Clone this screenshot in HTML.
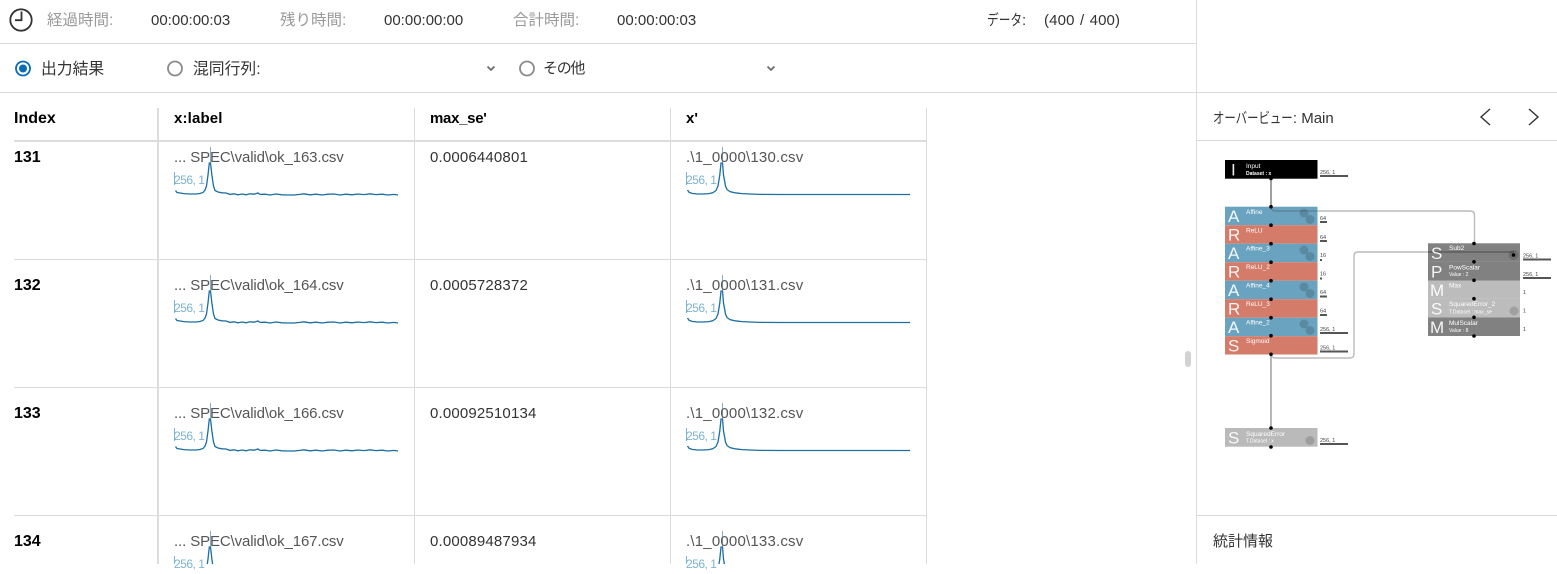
<!DOCTYPE html>
<html lang="ja"><head><meta charset="utf-8"><title>Results</title>
<style>
html,body{margin:0;padding:0;background:#fff}
body{width:1557px;height:564px;overflow:hidden;position:relative;font-family:"Liberation Sans","Noto Sans CJK JP",sans-serif;font-size:15px;color:#222}
.t{position:absolute;line-height:20px;height:20px;white-space:nowrap}
.g{color:#999;font-size:15.500px}
.b{font-weight:bold;color:#000}
.n{font-size:16px}
.d{color:#555}
.f1{letter-spacing:-.12px}
.f2{letter-spacing:.2px}
.f3{letter-spacing:.17px}
.l{color:#7fb2d0;font-size:12px;letter-spacing:-.5px}
.k{color:#333}
.c16{font-size:15.800px}
.sq{display:inline-block;transform-origin:left center}
svg{position:absolute;left:0;top:0}
svg text{font-family:"Liberation Sans",sans-serif}
.w5{font-size:6.500px;fill:#fff}
.w4{font-size:5px;fill:#fff}
.big{font-size:17px;fill:#fff;fill-opacity:.92}
.s{font-size:5.500px;fill:#444}
</style></head><body>
<svg width="1557" height="564" viewBox="0 0 1557 564">
<defs>
<path id="sp" fill="none" stroke="#1a6fa3" stroke-width="1.300" d="M175.500 190.500L177 192.500L180 193L184 193.600L190 194L196 194L200 193.500L203 192.500L205 190L206.500 186L208 175L209.300 163L210.500 163L212 176L213.500 186L215 190.500L218 192L222 192.800L226 193L230 194.400L234 193.800L238 194.800L242 194L246 194.800L250 193.800L254 194.200L258 193L260 194.400L265 194.200L270 195L276 194L282 194.800L288 195L294 195L300 194.400L304 193.800L310 194.800L316 194.200L322 195L328 194.200L334 194L340 195L346 194.200L352 194.800L358 194L364 194.600L370 193.800L376 194.600L382 194.200L388 195L394 194.400L398 195"/>
<path id="sq" fill="none" stroke="#1a6fa3" stroke-width="1.300" d="M687.500 190L689 192.200L692 193.400L697 194L703 194L709 193.600L713 192.600L716 190.500L718 186L719.800 175L721 163L722.500 163L723.500 175L725.500 186L727 189.500L730 191.600L735 192.800L742 193.600L750 194L760 194.400L780 194.500L910 194.500"/>
<g id="tk"><rect x="174" y="172" width="1" height="13" fill="#7fb2d0"/></g>
</defs>

<g fill="#dcdcdc">
<rect x="0" y="43" width="1196" height="1"/>
<rect x="0" y="92" width="1557" height="1"/>
<rect x="1196" y="0" width="1" height="564"/>
<rect x="1197" y="140" width="360" height="1"/>
<rect x="1197" y="515" width="360" height="1"/>
<rect x="14" y="140" width="912" height="2"/>
<rect x="14" y="259" width="912" height="1"/>
<rect x="14" y="387" width="912" height="1"/>
<rect x="14" y="515" width="912" height="1"/>
<rect x="157" y="108" width="2" height="456"/>
<rect x="414" y="108" width="1" height="456"/>
<rect x="670" y="108" width="1" height="456"/>
<rect x="926" y="108" width="1" height="456"/>
</g>

<circle cx="21" cy="20" r="10.700" fill="none" stroke="#333" stroke-width="1.800"/>
<path d="M21.500 11.500V20.200H15" fill="none" stroke="#333" stroke-width="1.800"/>

<circle cx="23" cy="68.500" r="7" fill="none" stroke="#0a6cb3" stroke-width="1.800"/>
<circle cx="23" cy="68.500" r="4" fill="#0a6cb3"/>
<circle cx="175" cy="68.500" r="7" fill="none" stroke="#8a8a8a" stroke-width="1.800"/>
<circle cx="527" cy="68.500" r="7" fill="none" stroke="#8a8a8a" stroke-width="1.800"/>
<path d="M487.500 66.500L491 70L494.500 66.500" fill="none" stroke="#666" stroke-width="1.600"/>
<path d="M767.500 66.500L771 70L774.500 66.500" fill="none" stroke="#666" stroke-width="1.600"/>

<path d="M1490 109L1481 117L1490 125" fill="none" stroke="#333" stroke-width="1.400"/>
<path d="M1529 109L1538 117L1529 125" fill="none" stroke="#333" stroke-width="1.400"/>

<rect x="1185" y="351" width="6" height="16" rx="3" fill="#d2d2d2"/>

<g id="r0">
<rect x="210" y="147" width="1" height="16" fill="#7fb2d0"/><rect x="722" y="147" width="1" height="16" fill="#7fb2d0"/>
<use href="#tk"/><use href="#tk" x="512"/><use href="#sp"/><use href="#sq"/>
</g>
<use href="#r0" y="128"/>
<use href="#r0" y="256"/>
<use href="#r0" y="384"/>

<g fill="none">
<path d="M1271 178V207" stroke="#777" stroke-width="1.400"/>
<path d="M1271 207Q1271 211 1276 211H1470Q1474.500 211 1474.500 215V244" stroke="#bbb" stroke-width="1.400"/>
<path d="M1271 354V428" stroke="#999" stroke-width="1.400"/>
<path d="M1271 354Q1271 358 1276 358H1350Q1354 358 1354 354V256Q1354 252 1358 252H1428" stroke="#bbb" stroke-width="1.400"/>
</g>

<rect x="1225" y="160" width="92.500" height="18.700" fill="#000"/>
<rect x="1225" y="206.700" width="92.500" height="18.500" fill="#69a3bf"/>
<rect x="1225" y="225.200" width="92.500" height="18.500" fill="#d47b69"/>
<rect x="1225" y="243.700" width="92.500" height="18.500" fill="#69a3bf"/>
<rect x="1225" y="262.200" width="92.500" height="18.500" fill="#d47b69"/>
<rect x="1225" y="280.700" width="92.500" height="18.500" fill="#69a3bf"/>
<rect x="1225" y="299.200" width="92.500" height="18.500" fill="#d47b69"/>
<rect x="1225" y="317.700" width="92.500" height="18.500" fill="#69a3bf"/>
<rect x="1225" y="336.200" width="92.500" height="18.300" fill="#d47b69"/>
<rect x="1225" y="428" width="92.500" height="18.700" fill="#bababa"/>

<rect x="1428" y="243.300" width="92" height="18.600" fill="#818181"/>
<rect x="1428" y="261.900" width="92" height="18.600" fill="#818181"/>
<rect x="1428" y="280.500" width="92" height="18.400" fill="#bcbcbc"/>
<rect x="1428" y="298.900" width="92" height="18.600" fill="#bcbcbc"/>
<rect x="1428" y="317.500" width="92" height="18.500" fill="#818181"/>
<path d="M1428 252H1514" stroke="#555" stroke-width="1.200" fill="none"/>
<path d="M1271 207Q1271 211 1276 211H1317" stroke="#5d7f90" stroke-width="1.200" fill="none"/>

<g fill="#000" fill-opacity=".15">
<circle cx="1304" cy="213" r="4.500"/><circle cx="1310" cy="219.500" r="4.500"/>
<circle cx="1304" cy="250" r="4.500"/><circle cx="1310" cy="256.500" r="4.500"/>
<circle cx="1304" cy="287" r="4.500"/><circle cx="1310" cy="293.500" r="4.500"/>
<circle cx="1304" cy="324" r="4.500"/><circle cx="1310" cy="330.500" r="4.500"/>
<circle cx="1513.500" cy="255" r="5"/><circle cx="1514" cy="311" r="4.500"/><circle cx="1310" cy="440.500" r="4.500"/>
</g>

<g fill="#000">
<circle cx="1271" cy="178.500" r="1.800"/><circle cx="1271" cy="206.700" r="1.800"/><circle cx="1271" cy="225.200" r="1.800"/><circle cx="1271" cy="243.700" r="1.800"/><circle cx="1271" cy="262.200" r="1.800"/><circle cx="1271" cy="280.700" r="1.800"/><circle cx="1271" cy="299.200" r="1.800"/><circle cx="1271" cy="317.700" r="1.800"/><circle cx="1271" cy="335.700" r="1.800"/><circle cx="1271" cy="354.300" r="1.800"/><circle cx="1271" cy="428" r="1.800"/><circle cx="1271" cy="447" r="1.800"/>
<circle cx="1474" cy="243.500" r="1.800"/><circle cx="1474" cy="261.800" r="1.800"/><circle cx="1474" cy="280.300" r="1.800"/><circle cx="1474" cy="298.700" r="1.800"/><circle cx="1474" cy="317.300" r="1.800"/><circle cx="1474" cy="336" r="1.800"/><circle cx="1513.500" cy="255" r="1.800"/>
</g>

<text class="big" x="1231" y="175.500">I</text>
<text class="big" x="1228" y="222">A</text>
<text class="big" x="1228" y="240.500">R</text>
<text class="big" x="1228" y="259">A</text>
<text class="big" x="1228" y="277.500">R</text>
<text class="big" x="1228" y="296">A</text>
<text class="big" x="1228" y="314.500">R</text>
<text class="big" x="1228" y="333">A</text>
<text class="big" x="1228" y="351.500">S</text>
<text class="big" x="1228" y="443.500">S</text>
<text class="big" x="1431" y="259">S</text>
<text class="big" x="1431" y="277.500">P</text>
<text class="big" x="1430" y="296">M</text>
<text class="big" x="1431" y="314.500">S</text>
<text class="big" x="1430" y="333">M</text>

<text class="w5" x="1246" y="168">Input</text><text class="w4" x="1246" y="175" font-weight="bold">Dataset : x</text>
<text class="w5" x="1246" y="214">Affine</text>
<text class="w5" x="1246" y="232.500">ReLU</text>
<text class="w5" x="1246" y="250.500">Affine_3</text>
<text class="w5" x="1246" y="269">ReLU_2</text>
<text class="w5" x="1246" y="287.500">Affine_4</text>
<text class="w5" x="1246" y="306">ReLU_3</text>
<text class="w5" x="1246" y="324.500">Affine_2</text>
<text class="w5" x="1246" y="343">Sigmoid</text>
<text class="w5" x="1246" y="436">SquaredError</text><text class="w4" x="1246" y="442.500">T.Dataset : x</text>
<text class="w5" x="1449" y="250">Sub2</text>
<text class="w5" x="1449" y="269.500">PowScalar</text><text class="w4" x="1449" y="276">Value : 2</text>
<text class="w5" x="1449" y="287.500">Max</text>
<text class="w5" x="1449" y="306">SquaredError_2</text><text class="w4" x="1449" y="313.500">T.Dataset : max_se</text>
<text class="w5" x="1449" y="325">MulScalar</text><text class="w4" x="1449" y="332">Value : 8</text>

<g fill="#555">
<rect x="1320" y="175" width="28" height="2"/><rect x="1320" y="221" width="7" height="2"/><rect x="1320" y="240" width="7" height="2"/><rect x="1320" y="259" width="2" height="2"/><rect x="1320" y="277.500" width="2" height="2"/><rect x="1320" y="295.500" width="7" height="2"/><rect x="1320" y="314" width="7" height="2"/><rect x="1320" y="332" width="28" height="2"/><rect x="1320" y="350.500" width="28" height="2"/><rect x="1320" y="443" width="28" height="2"/><rect x="1523" y="258.500" width="28" height="2"/><rect x="1523" y="277" width="28" height="2"/>
</g>
<text class="s" x="1320" y="174">256, 1</text>
<text class="s" x="1320" y="220">64</text>
<text class="s" x="1320" y="239">64</text>
<text class="s" x="1320" y="257">16</text>
<text class="s" x="1320" y="275.500">16</text>
<text class="s" x="1320" y="294">64</text>
<text class="s" x="1320" y="312.500">64</text>
<text class="s" x="1320" y="331">256, 1</text>
<text class="s" x="1320" y="349.500">256, 1</text>
<text class="s" x="1320" y="442">256, 1</text>
<text class="s" x="1523" y="257.500">256, 1</text>
<text class="s" x="1523" y="276">256, 1</text>
<text class="s" x="1523" y="294">1</text>
<text class="s" x="1523" y="312.500">1</text>
<text class="s" x="1523" y="331">1</text>
</svg>

<div class="t g" style="left:47px;top:11px">経過時間:</div>
<div class="t k" style="left:151px;top:11px">00:00:00:03</div>
<div class="t g" style="left:280px;top:11px">残り時間:</div>
<div class="t k" style="left:384px;top:11px">00:00:00:00</div>
<div class="t g" style="left:513px;top:11px">合計時間:</div>
<div class="t k" style="left:617px;top:11px">00:00:00:03</div>
<div class="t k" style="left:987px;top:11px"><span class="sq" style="transform:scaleX(.78);margin-right:-10px">データ</span>:</div>
<div class="t k" style="left:1044px;top:11px;word-spacing:1px;letter-spacing:.15px">(400 / 400)</div>

<div class="t k c16" style="left:41px;top:60px">出力結果</div>
<div class="t k c16" style="left:193px;top:60px">混同行列:</div>
<div class="t k" style="left:543px;top:59px;letter-spacing:-1.300px">その他</div>

<div class="t b n" style="left:14px;top:109px">Index</div>
<div class="t b" style="left:174px;top:109px;letter-spacing:.15px">x:label</div>
<div class="t b" style="left:430px;top:109px;letter-spacing:-.3px">max_se'</div>
<div class="t b" style="left:686px;top:109px">x'</div>

<div class="t b n" style="left:14px;top:148px">131</div>
<div class="t d f1" style="left:174px;top:148px">... SPEC\valid\ok_163.csv</div>
<div class="t k f3" style="left:430px;top:148px">0.0006440801</div>
<div class="t d f2" style="left:686px;top:148px">.\1_0000\130.csv</div>
<div class="t l" style="left:174px;top:170px">256, 1</div>
<div class="t l" style="left:686px;top:170px">256, 1</div>

<div class="t b n" style="left:14px;top:276px">132</div>
<div class="t d f1" style="left:174px;top:276px">... SPEC\valid\ok_164.csv</div>
<div class="t k f3" style="left:430px;top:276px">0.0005728372</div>
<div class="t d f2" style="left:686px;top:276px">.\1_0000\131.csv</div>
<div class="t l" style="left:174px;top:298px">256, 1</div>
<div class="t l" style="left:686px;top:298px">256, 1</div>

<div class="t b n" style="left:14px;top:404px">133</div>
<div class="t d f1" style="left:174px;top:404px">... SPEC\valid\ok_166.csv</div>
<div class="t k f3" style="left:430px;top:404px">0.00092510134</div>
<div class="t d f2" style="left:686px;top:404px">.\1_0000\132.csv</div>
<div class="t l" style="left:174px;top:426px">256, 1</div>
<div class="t l" style="left:686px;top:426px">256, 1</div>

<div class="t b n" style="left:14px;top:532px">134</div>
<div class="t d f1" style="left:174px;top:532px">... SPEC\valid\ok_167.csv</div>
<div class="t k f3" style="left:430px;top:532px">0.00089487934</div>
<div class="t d f2" style="left:686px;top:532px">.\1_0000\133.csv</div>
<div class="t l" style="left:174px;top:554px">256, 1</div>
<div class="t l" style="left:686px;top:554px">256, 1</div>

<div class="t k" style="left:1213px;top:109px"><span class="sq" style="transform:scaleX(.76);margin-right:-25px">オーバービュー</span>: Main</div>
<div class="t k" style="left:1213px;top:532px">統計情報</div>
</body></html>
